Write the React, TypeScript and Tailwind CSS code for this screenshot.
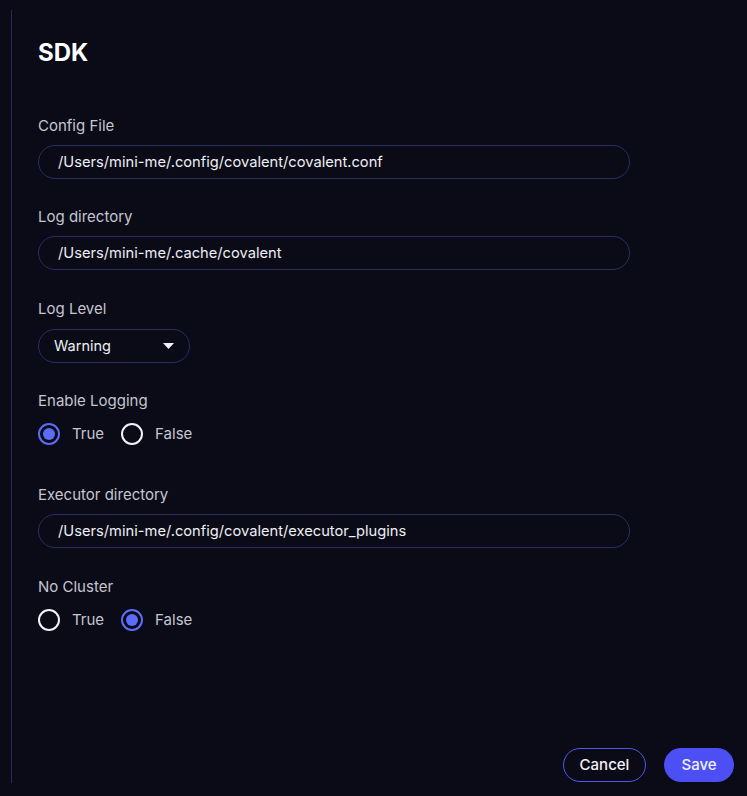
import { useState } from 'react';

type FieldProps = { label: string; value: string };

function TextField({ label, value }: FieldProps) {
    return (
        <div className="flex flex-col">
            <label className="text-[15px] leading-5 text-[#c5c6d0]">{label}</label>
            <input
                readOnly
                value={value}
                className="mt-[9px] h-[34px] w-[592px] rounded-full border border-[#2b2c66] bg-transparent px-[19px] text-[14.7px] text-[#eeeef4] outline-none"
            />
        </div>
    );
}

function Radio({ checked, label, onClick }: { checked: boolean; label: string; onClick: () => void }) {
    return (
        <button type="button" onClick={onClick} className="flex items-center gap-[12px]">
            <span
                className={
                    checked
                        ? 'flex h-[22px] w-[22px] items-center justify-center rounded-full border-2 border-[#5b6cf6]'
                        : 'flex h-[22px] w-[22px] items-center justify-center rounded-full border-2 border-[#f2f2f6]'
                }
            >
                {checked && <span className="h-[12px] w-[12px] rounded-full bg-[#5b6cf6]" />}
            </span>
            <span className="text-[15px] leading-5 text-[#c5c6d0]">{label}</span>
        </button>
    );
}

function RadioGroup({ label, value, onChange }: { label: string; value: boolean; onChange: (v: boolean) => void }) {
    return (
        <div className="flex flex-col">
            <span className="text-[15px] leading-5 text-[#c5c6d0]">{label}</span>
            <div className="mt-[12px] flex gap-[17px]">
                <Radio checked={value} label="True" onClick={() => onChange(true)} />
                <Radio checked={!value} label="False" onClick={() => onChange(false)} />
            </div>
        </div>
    );
}

export default function App() {
    const [logging, setLogging] = useState(true);
    const [noCluster, setNoCluster] = useState(false);

    return (
        <div
            className="h-[796px] w-[747px] bg-[#0a0b17] pb-[13px] pt-[10px] pl-[11px]"
            style={{ fontFamily: 'Inter, "Noto Sans", sans-serif' }}
        >
            <div className="flex h-full flex-col border-l border-[#272a58] pl-[26px] pr-[13px]">
                <h1 className="mt-[28px] text-[24px] font-bold leading-[30px] text-white">SDK</h1>

                <div className="mt-[48px]">
                    <TextField label="Config File" value="/Users/mini-me/.config/covalent/covalent.conf" />
                </div>
                <div className="mt-[28px]">
                    <TextField label="Log directory" value="/Users/mini-me/.cache/covalent" />
                </div>

                <div className="mt-[29px] flex flex-col">
                    <label className="text-[15px] leading-5 text-[#c5c6d0]">Log Level</label>
                    <div className="mt-[10px] flex h-[34px] w-[152px] items-center justify-between rounded-full border border-[#2b2c66] pl-[15px] pr-[15px]">
                        <span className="text-[14.5px] text-[#eeeef4]">Warning</span>
                        <svg width="11" height="6" viewBox="0 0 11 6">
                            <path d="M0 0h11L5.5 6z" fill="#f2f2f6" />
                        </svg>
                    </div>
                </div>

                <div className="mt-[28px]">
                    <RadioGroup label="Enable Logging" value={logging} onChange={setLogging} />
                </div>

                <div className="mt-[40px]">
                    <TextField label="Executor directory" value="/Users/mini-me/.config/covalent/executor_plugins" />
                </div>

                <div className="mt-[29px]">
                    <RadioGroup label="No Cluster" value={noCluster} onChange={setNoCluster} />
                </div>

                <div className="flex-1" />

                <div className="mb-[1px] flex justify-end gap-[18px]">
                    <button className="h-[34px] w-[83px] rounded-full border border-[#4f58ea] text-[15px] font-medium text-[#f2f2f6]">
                        Cancel
                    </button>
                    <button className="h-[34px] w-[70px] rounded-full bg-[#4b4ff4] text-[15px] font-medium text-[#f2f2f6]">
                        Save
                    </button>
                </div>
            </div>
        </div>
    );
}
